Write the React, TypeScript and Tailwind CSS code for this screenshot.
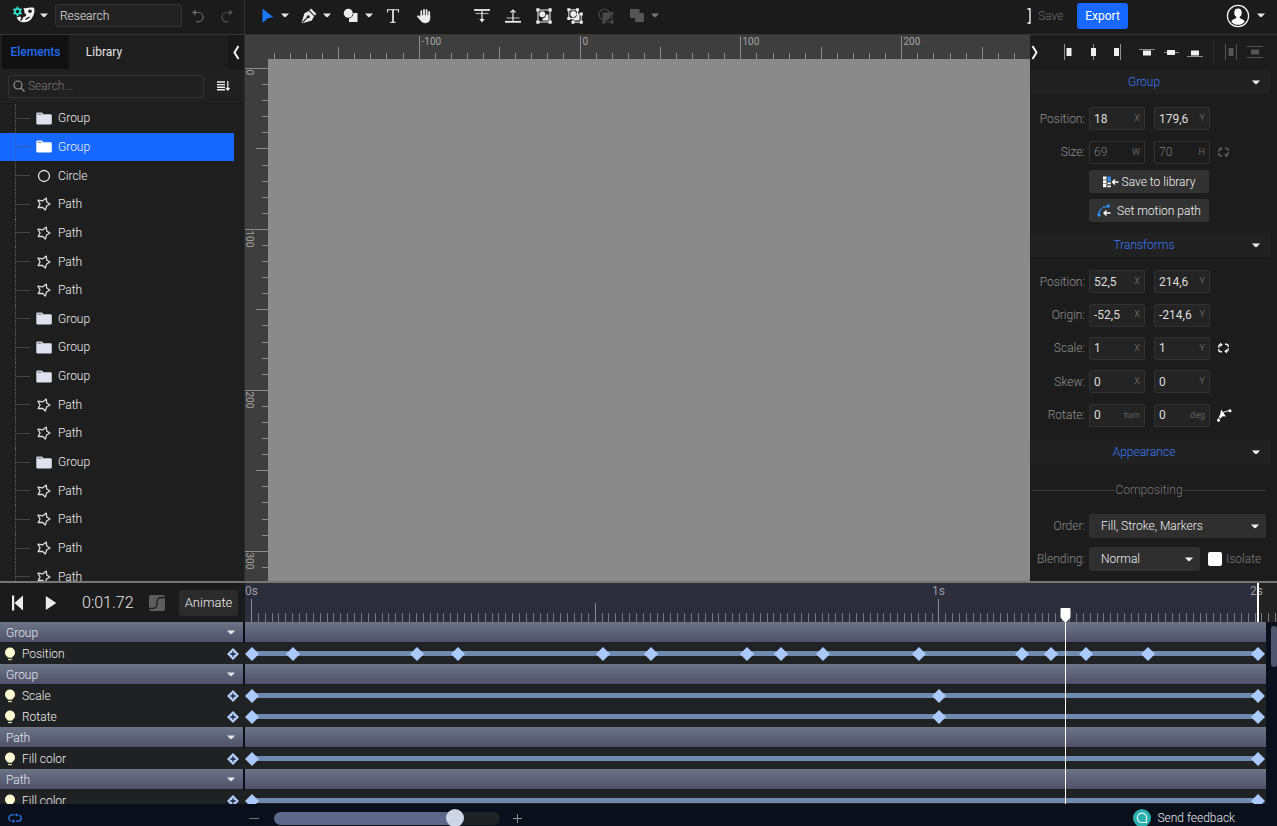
import React, { useEffect, useRef, useState } from "react";

type IconProps = { className?: string };

const Caret = ({ className = "text-[#e6e6e6]" }: IconProps) => (
  <svg width="8" height="5" viewBox="0 0 8 5" className={className} fill="currentColor" aria-hidden="true">
    <path d="M0 .5h8L5 3.8a1.5 1.5 0 0 1-2 0z" />
  </svg>
);

const Logo = () => (
  <svg width="24" height="18" viewBox="0 0 24 18" aria-hidden="true">
    <circle cx="5.500" cy="5.500" r="2.600" fill="none" stroke="#35e0cf" strokeWidth="1.700" />
    <path d="M5.500.8v2M5.500 8.200v2M1.400 3.200l1.800 1M7.800 6.800l1.800 1M1.400 7.800l1.800-1M7.800 4.200l1.800-1" stroke="#35e0cf" strokeWidth="1.900" />
    <path d="M11.500 2C15 3 18 .8 22 1.800c1 3.200.3 6.700-1.500 9.200-1.500 3.200-4 5-8 5.300-4 .2-6.800-1.500-8-5.300 1.600.5 2.600.3 3.500-.7 1 .9 1.400 2.200 2.900 2.200 1.600-2.600 2.300-6.200.6-10.500z" fill="#f2f2f2" />
    <circle cx="18" cy="5.300" r="1.800" fill="#1c1c1c" />
    <circle cx="12.500" cy="9" r="1.700" fill="#1c1c1c" />
    <path d="M13.500 13.500l4-2.300M8.500 14.500l1.800-2.200" stroke="#1c1c1c" strokeWidth="1.400" />
  </svg>
);

const Undo = ({ className }: IconProps) => (
  <svg width="14" height="16" viewBox="0 0 14 16" className={className} fill="none" stroke="currentColor" strokeWidth="1.200" aria-hidden="true">
    <path d="M2 4.500h5.500a4.500 4.500 0 0 1 0 9.200H5.500" />
    <path d="M4.800 1.500v6L1 4.500z" fill="currentColor" stroke="none" />
  </svg>
);

const Pointer = () => (
  <svg width="14" height="16" viewBox="0 0 14 16" aria-hidden="true">
    <path d="M2.500.8 13.500 9.200 8 10l-5.500 5z" fill="#1a78ff" />
  </svg>
);

const Pen = () => (
  <svg width="16" height="16" viewBox="0 0 16 16" aria-hidden="true">
    <path d="M10 .5 15.500 6l-1.800 1.500L8.500 2.200z" fill="#ececec" />
    <path d="M7.800 3 13 8.200l-2.200 4.300L1.500 15.300l-.9-.9L3.500 5.200z" fill="#ececec" />
    <path d="m1.500 14.500 5.200-5.300" stroke="#1c1c1c" strokeWidth="1.200" />
    <circle cx="7.300" cy="8.700" r="1.500" fill="#1c1c1c" />
  </svg>
);

const Shapes = () => (
  <svg width="16" height="15" viewBox="0 0 16 15" aria-hidden="true">
    <path d="M10.500 5H14.500V14H6V10.500A6 6 0 0 0 10.500 5z" fill="#ececec" />
    <circle cx="5.300" cy="5.300" r="4.500" fill="#ececec" />
  </svg>
);

const TextTool = () => (
  <svg width="14" height="16" viewBox="0 0 14 16" fill="none" stroke="#ececec" aria-hidden="true">
    <path d="M1.500 4.500V1.700h11v2.800" strokeWidth="1.100" />
    <path d="M7 1.700v12.600" strokeWidth="1.700" />
    <path d="M4.300 14.300h5.400" strokeWidth="1.100" />
  </svg>
);

const Hand = () => (
  <svg width="16" height="16" viewBox="0 0 16 16" fill="none" stroke="#ececec" strokeLinecap="round" aria-hidden="true">
    <path d="M5.300 8V3.200M8 8V1.800M10.600 8V2.200M13.200 9V4" strokeWidth="1.800" />
    <path d="M4.500 7.500h9.500v3c0 2.500-1.800 4.400-4.600 4.400-2.200 0-3.500-.8-4.700-2.400L1 8.300c.8-1.100 2-.6 3.500.7z" fill="#ececec" strokeWidth=".5" />
  </svg>
);

const MoveDown = () => (
  <svg width="16" height="14" viewBox="0 0 16 14" aria-hidden="true">
    <path d="M0 1h16" stroke="#ececec" strokeWidth="1.800" />
    <path d="M1.500 4.500h13" stroke="#a8a8a8" strokeWidth="1.200" />
    <path d="M8 2v9.500" stroke="#ececec" strokeWidth="1.200" />
    <path d="M5.300 10h5.400L8 13.500z" fill="#ececec" />
  </svg>
);

const MoveUp = () => (
  <svg width="16" height="14" viewBox="0 0 16 14" aria-hidden="true">
    <path d="M0 12.800h16" stroke="#ececec" strokeWidth="1.800" />
    <path d="M1.500 9h13" stroke="#a8a8a8" strokeWidth="1.200" />
    <path d="M8 12V2" stroke="#ececec" strokeWidth="1.200" />
    <path d="m5.500 3.500 2.500-2.500 2.500 2.500" stroke="#ececec" strokeWidth="1.100" fill="none" />
  </svg>
);

const GroupIcon = () => (
  <svg width="16" height="16" viewBox="0 0 16 16" fill="#ececec" aria-hidden="true">
    <path d="M2 2h12v12H2z" fill="none" stroke="#ececec" strokeWidth="1.100" />
    <path d="M.3.300h3.200v3.200H.3zM12.500.300h3.200v3.200h-3.200zM.3 12.500h3.200v3.200H.3zM12.500 12.500h3.200v3.200h-3.200z" />
    <circle cx="6.300" cy="6.300" r="3" />
    <path d="M10 6.500h2.500v6H6.500V10.500A4 4 0 0 0 10 6.500z" />
  </svg>
);

const UngroupIcon = () => (
  <svg width="16" height="16" viewBox="0 0 16 16" fill="#ececec" aria-hidden="true">
    <path d="M1.800 1.800h8.700v8.700H1.800z" fill="none" stroke="#ececec" />
    <path d="M6 6h8.200v8.200H6z" fill="none" stroke="#ececec" />
    <path d="M.3.300h3v3h-3zM9 .3h3v3H9zM.3 9h3v3h-3zM12.800 4.500h3v3h-3zM12.800 12.800h3v3h-3zM4.500 12.800h3v3h-3z" />
    <circle cx="6.300" cy="6" r="3" />
    <path d="M10 6.500h2.500v6H7V10A4 4 0 0 0 10 6.500z" />
  </svg>
);

const MaskIcon = () => (
  <svg width="16" height="16" viewBox="0 0 16 16" fill="#4a4a4a" aria-hidden="true">
    <circle cx="6.500" cy="6.500" r="5.500" fill="none" stroke="#4a4a4a" strokeWidth="1.200" />
    <path d="M5.500 5.500h8.500v8.500H5.500z" fill="none" stroke="#4a4a4a" />
    <path d="M4.500 4.500H12A5.500 5.500 0 0 1 4.500 12z" />
    <path d="M12.800 3.800h2.700v2.700h-2.700zM12.800 12.800h2.700v2.700h-2.700zM4.300 12.800H7v2.700H4.300z" />
  </svg>
);

const UniteIcon = () => (
  <svg width="16" height="15" viewBox="0 0 16 15" aria-hidden="true">
    <path d="M2 1h7.500a1 1 0 0 1 1 1v3H14a1 1 0 0 1 1 1v7a1 1 0 0 1-1 1H7a1 1 0 0 1-1-1v-3H2a1 1 0 0 1-1-1V2a1 1 0 0 1 1-1z" fill="#555" />
  </svg>
);

const Avatar = () => (
  <svg width="24" height="24" viewBox="0 0 24 24" aria-hidden="true">
    <circle cx="12" cy="12" r="10.600" fill="#1c1c1c" stroke="#f4f4f4" strokeWidth="1.200" />
    <ellipse cx="12" cy="8.700" rx="3.700" ry="4.300" fill="#fff" />
    <path d="M10.300 11h3.400v2.800c.6 1.200 3.800 1.500 5 3.600A9 9 0 0 1 12 20.800 9 9 0 0 1 5.300 17.400c1.200-2.100 4.400-2.400 5-3.600z" fill="#fff" />
  </svg>
);

const Angle = ({ flip = false }: { flip?: boolean }) => (
  <svg width="8" height="15" viewBox="0 0 8 15" fill="none" stroke="#f4f4f4" strokeWidth="2" aria-hidden="true">
    <path d={flip ? "M1.500 1 5.500 7.500 1.500 14" : "M6.500 1 2.500 7.500 6.500 14"} />
  </svg>
);

const SearchIcon = () => (
  <svg width="12" height="12" viewBox="0 0 12 12" fill="none" stroke="#9a9a9a" strokeWidth="1.100" aria-hidden="true">
    <circle cx="5" cy="5" r="4" />
    <path d="m8 8 3.500 3.500" />
  </svg>
);

const SortIcon = () => (
  <svg width="13" height="10" viewBox="0 0 13 10" fill="none" stroke="#f0f0f0" aria-hidden="true">
    <path d="M0 1h8M0 3.600h8M0 6.200h8M0 8.800h8" strokeWidth="1.400" />
    <path d="M10.800 0v8.500M9 7l1.800 2L12.600 7" strokeWidth="1.200" />
  </svg>
);

const Folder = ({ className = "text-[#dfe2ee]" }: IconProps) => (
  <svg width="16" height="13" viewBox="0 0 16 13" className={className} aria-hidden="true">
    <path d="M.3 9V1.800A1.300 1.300 0 0 1 1.600.500h4a1.300 1.300 0 0 1 1.200.9l.3.900h7.400A1.300 1.300 0 0 1 15.800 3.600v7.700a1.300 1.300 0 0 1-1.300 1.300H1.600A1.300 1.300 0 0 1 .3 11.300z" fill="currentColor" />
    <path d="M1.500 2.200h4" stroke="#1e1e1e" strokeWidth=".6" />
  </svg>
);

const CircleIcon = () => (
  <svg width="16" height="14" viewBox="0 0 16 14" aria-hidden="true">
    <circle cx="8" cy="7" r="5.500" fill="none" stroke="#dedede" strokeWidth="1.300" />
  </svg>
);

const Star = () => (
  <svg width="16" height="14" viewBox="0 0 16 14" fill="none" stroke="#dedede" strokeWidth="1.300" strokeLinejoin="round" aria-hidden="true">
    <path d="M10.300 1.100 10.700 5 14 7 10.600 9 9.300 13.100 6.500 10.300 2.200 10.500 4 7 2 3.200 6.500 3.900z" />
  </svg>
);

const Chain = ({ className }: IconProps) => (
  <svg width="13" height="12" viewBox="0 0 13 12" fill="none" stroke="currentColor" strokeWidth="1.400" className={className} aria-hidden="true">
    <path d="M5 9.800H3.800Q1.800 9.800 1.800 8V7M1.800 5.800V4.500Q1.800 2.800 3.500 2.800" />
    <path d="M3 .5 5.800 2.800 3 5z" fill="currentColor" stroke="none" />
    <path d="M8 2.200h1.200Q11.200 2.200 11.200 4V5M11.200 6.200v1.300Q11.200 9.200 9.500 9.200" />
    <path d="M10 11.500 7.200 9.200 10 7z" fill="currentColor" stroke="none" />
  </svg>
);

const RotateIcon = () => (
  <svg width="15" height="13" viewBox="0 0 15 13" aria-hidden="true">
    <path d="M1.500 11Q2.500 5 6 3.500T13 1.500" stroke="#e8e8e8" fill="none" />
    <circle cx="13" cy="1.800" r="1.500" fill="#fff" />
    <circle cx="1.500" cy="11.300" r="1.500" fill="#fff" />
    <path d="M4 .5 9 7.500l-3.300-.2L2.800 10z" fill="#fff" />
  </svg>
);

const LibraryIcon = () => (
  <svg width="16" height="12" viewBox="0 0 16 12" aria-hidden="true">
    <path d="M0 .5h3.500v3H0zM0 7.800h3.500v3.500H0zM0 4.200h3.500v3H0z" fill="#fff" />
    <path d="M4.500.500h3.300v5H4.500z" fill="#2f8df0" />
    <path d="M4.500 6.500h3.300v1.800H4.500zM4.500 9.500h3.300v1.800H4.500z" fill="#fff" />
    <path d="M9.500 6h6M12 3.500 9.500 6l2.500 2.500" stroke="#fff" strokeWidth="1.400" fill="none" />
  </svg>
);

const MotionIcon = () => (
  <svg width="14" height="13" viewBox="0 0 14 13" aria-hidden="true">
    <path d="M2 10Q2.500 3 11 2.300" stroke="#2f8df0" strokeWidth="1.200" fill="none" strokeDasharray="6 1.500" />
    <circle cx="2" cy="11" r="1.700" fill="#2f8df0" />
    <circle cx="11.300" cy="2" r="1.700" fill="#2f8df0" />
    <path d="M7 9h6.500M9.500 6.500 7 9l2.500 2.500" stroke="#fff" strokeWidth="1.400" fill="none" />
  </svg>
);

const AlignIcon = ({ line, box, dim = false }: { line: string; box: string; dim?: boolean }) => (
  <svg width="16" height="16" viewBox="0 0 16 16" aria-hidden="true">
    <path d={line} stroke={dim ? "#555" : "#8f8f8f"} fill="none" />
    <path d={box} fill={dim ? "#555" : "#f0f0f0"} />
  </svg>
);

const Bulb = () => (
  <svg width="12" height="14" viewBox="0 0 12 14" aria-hidden="true">
    <circle cx="6" cy="5.500" r="5" fill="#fdfcd2" />
    <path d="M3.500 9h5v1.500h-5z" fill="#fdfcd2" />
    <path d="M4 12.500h4" stroke="#d8d6a4" strokeWidth="1.300" />
  </svg>
);

const AddKey = () => (
  <svg width="12" height="12" viewBox="0 0 12 12" aria-hidden="true">
    <path d="M6 0l6 6-6 6-6-6z" fill="#b4d0fa" />
    <path d="M6 3.300v5.400M3.300 6h5.400" stroke="#14233c" strokeWidth="1.300" />
  </svg>
);

const Key = () => (
  <svg width="14" height="14" viewBox="0 0 14 14" aria-hidden="true">
    <path d="M7 0l7 7-7 7-7-7z" fill="#a9cafa" />
  </svg>
);

const iconButton = "flex h-6 w-5 shrink-0 items-center justify-center";
const caretButton = "flex h-6 w-4 shrink-0 items-center justify-center";

function Header() {
  return (
    <header className="flex h-[35px] shrink-0 border-b border-[#353535] bg-[#1b1b1b]">
      <div className="flex w-[245px] shrink-0 items-start border-r border-[#353535]">
        <button aria-label="Main menu" className="mt-[6px] ml-3 flex h-[18px] items-center gap-1">
          <Logo />
          <Caret />
        </button>
        <input
          aria-label="Project name"
          defaultValue="Research"
          className="mt-1 ml-[7px] h-[23px] w-[127px] rounded-[3px] border border-[#333] bg-[#222] px-1 text-xs font-light text-[#e4e4e4] outline-none"
        />
        <button aria-label="Undo" className="ml-2 flex h-[31px] w-[15px] items-center justify-center">
          <Undo className="text-[#666]" />
        </button>
        <button aria-label="Redo" className="ml-[14px] flex h-[31px] w-[15px] items-center justify-center">
          <Undo className="-scale-x-100 text-[#505050]" />
        </button>
      </div>
      <div className="flex h-[31px] min-w-0 flex-1 items-center overflow-hidden pl-3">
        <button aria-label="Select" className={iconButton}><Pointer /></button>
        <button aria-label="Select options" className={caretButton}><Caret /></button>
        <button aria-label="Pen" className={iconButton + " ml-[6px]"}><Pen /></button>
        <button aria-label="Pen options" className={caretButton}><Caret /></button>
        <button aria-label="Shapes" className={iconButton + " ml-[6px]"}><Shapes /></button>
        <button aria-label="Shape options" className={caretButton}><Caret /></button>
        <button aria-label="Text" className={iconButton + " ml-[6px]"}><TextTool /></button>
        <button aria-label="Pan" className={iconButton + " ml-[11px]"}><Hand /></button>
        <div className="ml-[38px] flex gap-[11px]">
          <button aria-label="Move backward" className={iconButton}><MoveDown /></button>
          <button aria-label="Move forward" className={iconButton}><MoveUp /></button>
          <button aria-label="Group" className={iconButton}><GroupIcon /></button>
          <button aria-label="Ungroup" className={iconButton}><UngroupIcon /></button>
          <button aria-label="Mask" className={iconButton}><MaskIcon /></button>
          <button aria-label="Unite" className={iconButton}><UniteIcon /></button>
        </div>
        <button aria-label="Boolean options" className={caretButton}><Caret className="text-[#777]" /></button>
      </div>
      <div className="flex h-[31px] shrink-0 items-center pr-3">
        <svg width="4" height="16" viewBox="0 0 4 16" fill="none" stroke="#fff" strokeWidth="1.300" aria-hidden="true">
          <path d="M.5 1h2.500v14H.5" />
        </svg>
        <button className="ml-[7px] w-[27px] text-left text-xs font-light text-[#6e6e6e]">Save</button>
        <button className="ml-3 h-[26px] w-[51px] rounded-[3px] bg-[#1668ff] text-xs text-white">Export</button>
        <button aria-label="Account" className="ml-[98px] flex items-center gap-[7px]">
          <Avatar />
          <Caret />
        </button>
      </div>
    </header>
  );
}

const treeItems = [
  "Group", "Group", "Circle", "Path", "Path", "Path", "Path", "Group", "Group",
  "Group", "Path", "Path", "Group", "Path", "Path", "Path", "Path",
];

function ElementsPanel() {
  const [selected, setSelected] = useState(1);
  return (
    <aside className="flex w-[245px] shrink-0 flex-col overflow-hidden border-r border-[#2a2a2a] bg-[#1e1e1e]">
      <div className="flex h-[34px] shrink-0 items-stretch pl-[2px] text-xs">
        <button className="w-[67px] rounded-[3px] bg-[#111] font-medium text-[#1f6cf0]">Elements</button>
        <button className="w-[70px] text-[#e2e2e2]">Library</button>
        <button aria-label="Collapse panel" className="ml-auto flex w-4 items-center justify-center bg-[#191919]"><Angle /></button>
      </div>
      <div className="flex h-[35px] shrink-0 items-center border-b border-[#1a1a1a] bg-[#202020] pl-2">
        <label className="flex h-[23px] w-[196px] items-center gap-[3px] rounded-[3px] border border-[#323232] px-1">
          <SearchIcon />
          <input aria-label="Search elements" placeholder="Search..." className="min-w-0 flex-1 bg-transparent text-xs font-light text-white outline-none placeholder:text-[#7a7a7a]" />
        </label>
        <button aria-label="Sort" className="ml-[13px]"><SortIcon /></button>
      </div>
      <div className="min-h-0 flex-1 overflow-hidden">
        <ul className="grid h-[487px] auto-rows-fr">
          {treeItems.map((name, i) => (
            <li key={i} className={selected === i ? "w-[234px] bg-[#1668ff]" : "w-[234px]"}>
              <button onClick={() => setSelected(i)} className="flex h-full w-full items-center pl-[15px] text-left">
                <span className={selected === i ? "h-full border-l border-dotted border-[#2a5cb8]" : "h-full border-l border-dotted border-[#606060]"} />
                <span className={selected === i ? "w-[14px] border-t border-[#2a5cb8]" : "w-[14px] border-t border-[#444]"} />
                <span className="ml-[6px]">
                  {name === "Group" ? <Folder className={selected === i ? "text-white" : "text-[#dfe2ee]"} /> : name === "Circle" ? <CircleIcon /> : <Star />}
                </span>
                <span className="ml-[6px] text-xs font-light text-[#f0f0f0]">{name}</span>
              </button>
            </li>
          ))}
        </ul>
      </div>
    </aside>
  );
}

const UNIT = 16.09;

function tickLength(k: number) {
  if (k % 10 === 0) return 23;
  return k % 5 === 0 ? 12 : 6;
}

function Canvas() {
  const ref = useRef<HTMLElement>(null);
  const [size, setSize] = useState({ width: 0, height: 0 });

  useEffect(() => {
    const element = ref.current;
    if (!element) return;
    const measure = () => setSize({ width: element.clientWidth, height: element.clientHeight });
    measure();
    const observer = new ResizeObserver(measure);
    observer.observe(element);
    return () => observer.disconnect();
  }, []);

  const columns = Math.max(0, Math.ceil((size.width - 30) / UNIT));
  const lines = Math.max(0, Math.ceil((size.height - 34) / UNIT));
  const horizontal = Array.from({ length: columns }, (_, i) => i - 19);
  const vertical = Array.from({ length: lines }, (_, i) => i);

  return (
    <main ref={ref} className="grid min-w-0 flex-1 grid-cols-[23px_1fr] grid-rows-[24px_1fr] overflow-hidden bg-[#3e3e3e]">
      <div className="col-span-2 overflow-hidden">
        <svg width="100%" height="24" className="block" aria-hidden="true">
          {horizontal.map((k) => {
            const x = Math.round(335.500 + k * UNIT) - 0.5;
            return (
              <g key={k}>
                <path d={`M${x} ${24 - tickLength(k)}V24`} stroke="#8c8c8c" />
                {k % 10 === 0 && <text x={x + 2} y="10" fontSize="10" fill="#a5a5a5">{k * 10}</text>}
              </g>
            );
          })}
        </svg>
      </div>
      <div className="overflow-hidden">
        <svg width="23" height="100%" className="block" aria-hidden="true">
          {vertical.map((k) => {
            const y = Math.round(10 + k * UNIT) - 0.5;
            return (
              <g key={k}>
                <path d={`M${23 - tickLength(k)} ${y}H23`} stroke="#8c8c8c" />
                {k % 10 === 0 && <text fontSize="10" fill="#a5a5a5" transform={`translate(1 ${y + 1}) rotate(90)`}>{k * 10}</text>}
              </g>
            );
          })}
        </svg>
      </div>
      <div className="bg-[#8a8a8a]" />
    </main>
  );
}

function SectionTitle({ children }: { children: string }) {
  return (
    <button className="mr-[7px] ml-px flex h-6 items-center bg-[#212121] pl-[15px] text-xs font-light text-[#3a7bf5]">
      <span className="flex-1 text-center">{children}</span>
      <span className="flex w-7 justify-center"><Caret className="text-[#f4f4f4]" /></span>
    </button>
  );
}

function Field({ label, value, unit, dim = false }: { label: string; value: string; unit: string; dim?: boolean }) {
  return (
    <span className={dim ? "flex h-[23px] w-14 items-center rounded-[2px] border border-[#333] pr-1 pl-1" : "flex h-[23px] w-14 items-center rounded-[2px] border border-[#313131] bg-[#242424] pr-1 pl-1"}>
      <input
        aria-label={label + " " + unit}
        defaultValue={value}
        className={dim ? "w-0 min-w-0 flex-1 bg-transparent text-xs font-light text-[#7c7c7c] outline-none" : "w-0 min-w-0 flex-1 bg-transparent text-xs text-[#dedede] outline-none"}
      />
      <span className="text-[9px] text-[#626262]">{unit}</span>
    </span>
  );
}

function FieldRow({ label, values, units, dim = false, children }: { label: string; values: [string, string]; units: [string, string]; dim?: boolean; children?: React.ReactNode }) {
  return (
    <div role="group" aria-label={label} className="flex items-center">
      <span className="w-[55px] text-right text-xs font-light text-[#929292]">{label}:</span>
      <span className="ml-1 flex gap-[9px]">
        <Field label={label} value={values[0]} unit={units[0]} dim={dim} />
        <Field label={label} value={values[1]} unit={units[1]} dim={dim} />
      </span>
      <span className="ml-[7px]">{children}</span>
    </div>
  );
}

function PropertiesPanel() {
  const actionButton = "flex h-[23px] w-[120px] items-center justify-center rounded-[2px] bg-[#323232] text-xs font-light whitespace-nowrap text-[#f4f4f4]";
  return (
    <aside className="flex w-[247px] shrink-0 flex-col overflow-hidden bg-[#1c1c1c]">
      <div className="flex h-[34px] shrink-0 items-center">
        <button aria-label="Collapse properties" className="flex w-[10px] justify-center"><Angle flip /></button>
        <div className="ml-[21px] flex gap-2">
          <button aria-label="Align left"><AlignIcon line="M3.500 0v16" box="M5.500 4h5v8h-5z" /></button>
          <button aria-label="Align center"><AlignIcon line="M8.500 0v16" box="M6 4h5v8H6z" /></button>
          <button aria-label="Align right"><AlignIcon line="M11.500 0v16" box="M5 4h5v8H5z" /></button>
        </div>
        <div className="ml-[14px] flex gap-2">
          <button aria-label="Align top"><AlignIcon line="M0 5.500h16" box="M4 6.500h8v5H4z" /></button>
          <button aria-label="Align middle"><AlignIcon line="M1 8.500h15" box="M4 6h8v5H4z" /></button>
          <button aria-label="Align bottom"><AlignIcon line="M0 12.500h16" box="M4 6.500h8v5H4z" /></button>
        </div>
        <span className="ml-[10px] h-6 border-l border-[#2c2c2c]" />
        <div className="ml-[9px] flex gap-2">
          <button aria-label="Distribute horizontally"><AlignIcon dim line="M2.500 0v16M13.500 0v16" box="M5.500 4h5v8h-5z" /></button>
          <button aria-label="Distribute vertically"><AlignIcon dim line="M0 2.500h16M0 13.500h16" box="M4 5.500h8v5H4z" /></button>
        </div>
      </div>

      <div className="mt-px flex shrink-0 flex-col">
        <SectionTitle>Group</SectionTitle>
        <div className="mt-2 grid h-[67px] auto-rows-fr items-center">
          <FieldRow label="Position" values={["18", "179,6"]} units={["X", "Y"]} />
          <FieldRow label="Size" values={["69", "70"]} units={["W", "H"]} dim>
            <Chain className="text-[#5c5c5c]" />
          </FieldRow>
        </div>
        <div className="mt-px ml-[59px] flex flex-col gap-[6px]">
          <button className={actionButton + " gap-[3px]"}><LibraryIcon />Save to library</button>
          <button className={actionButton + " gap-[6px]"}><MotionIcon />Set motion path</button>
        </div>
      </div>

      <div className="mt-[11px] flex shrink-0 flex-col">
        <SectionTitle>Transforms</SectionTitle>
        <div className="mt-2 grid h-[167px] auto-rows-fr items-center">
          <FieldRow label="Position" values={["52,5", "214,6"]} units={["X", "Y"]} />
          <FieldRow label="Origin" values={["-52,5", "-214,6"]} units={["X", "Y"]} />
          <FieldRow label="Scale" values={["1", "1"]} units={["X", "Y"]}>
            <Chain className="text-[#f0f0f0]" />
          </FieldRow>
          <FieldRow label="Skew" values={["0", "0"]} units={["X", "Y"]} />
          <FieldRow label="Rotate" values={["0", "0"]} units={["turn", "deg"]}>
            <RotateIcon />
          </FieldRow>
        </div>
      </div>

      <div className="mt-2 flex shrink-0 flex-col">
        <SectionTitle>Appearance</SectionTitle>
        <div className="mt-4 mr-[11px] ml-[2px] flex h-5 items-center text-xs font-light text-[#777]">
          <span className="flex-1 border-t border-[#383838]" />
          Compositing
          <span className="flex-1 border-t border-[#383838]" />
        </div>
        <div className="mt-[14px] mr-[11px] flex items-center">
          <label htmlFor="order" className="w-[55px] text-right text-xs font-light text-[#8a8a8a]">Order:</label>
          <span className="relative ml-1 flex flex-1 items-center">
            <select id="order" className="h-6 w-full appearance-none rounded-[2px] bg-[#2f2f2f] pl-3 text-xs font-light text-[#f0f0f0] outline-none">
              <option>Fill, Stroke, Markers</option>
            </select>
            <span className="pointer-events-none absolute right-[7px]"><Caret className="text-[#f4f4f4]" /></span>
          </span>
        </div>
        <div className="mt-[9px] flex items-center">
          <label htmlFor="blending" className="w-[55px] text-right text-xs font-light whitespace-nowrap text-[#8a8a8a]">Blending:</label>
          <span className="relative ml-1 flex w-[111px] items-center">
            <select id="blending" className="h-6 w-full appearance-none rounded-[2px] bg-[#2f2f2f] pl-3 text-xs font-light text-[#f0f0f0] outline-none">
              <option>Normal</option>
            </select>
            <span className="pointer-events-none absolute right-[7px]"><Caret className="text-[#f4f4f4]" /></span>
          </span>
          <label className="ml-2 flex items-center gap-1 text-xs font-light text-[#7c7c7c]">
            <input type="checkbox" className="size-[14px] appearance-none rounded-[2px] bg-white checked:bg-[#1668ff]" />
            Isolate
          </label>
        </div>
      </div>
    </aside>
  );
}

type Row = { name: string; keys?: number[] };

const rows: Row[] = [
  { name: "Group" },
  { name: "Position", keys: [0, 6, 24, 30, 51, 58, 72, 77, 83, 97, 112, 116.3, 121.3, 130.3, 146.3] },
  { name: "Group" },
  { name: "Scale", keys: [0, 100, 146.3] },
  { name: "Rotate", keys: [0, 100, 146.3] },
  { name: "Path" },
  { name: "Fill color", keys: [0, 146.3] },
  { name: "Path" },
  { name: "Fill color", keys: [0, 146.3] },
];

const frameX = (frame: number) => Math.round(7 + frame * 6.874);

const headingRow = "h-[21px] shrink-0 border-b border-[#1c1c22] bg-linear-to-b from-[#6d7587] to-[#50516a]";

function Timeline() {
  const [zoom, setZoom] = useState(825);
  const fill = (9 + (zoom / 1000) * 208) / 2.26;
  const frames = Array.from({ length: 400 }, (_, i) => i - 1);
  return (
    <section className="shrink-0 border-t-2 border-[#767676] bg-[#0a101b]">
      <div className="flex">
        <div className="w-[245px] shrink-0">
          <div className="flex h-[39px] items-center bg-[#1b1b1b]">
            <button aria-label="Go to start" className="ml-[11px]">
              <svg width="13" height="16" viewBox="0 0 13 16" fill="#ececec" aria-hidden="true"><path d="M1 .5h2.200v15H1zM12 .5v15L3.500 8z" /></svg>
            </button>
            <button aria-label="Play" className="ml-[21px]">
              <svg width="12" height="16" viewBox="0 0 12 16" fill="#ececec" aria-hidden="true"><path d="M.8 1 11.300 8 .8 15z" /></svg>
            </button>
            <time className="ml-[25px] w-14 text-base font-light text-[#e4e4e4]">0:01.72</time>
            <button aria-label="Easing" className="ml-[11px]">
              <svg width="16" height="16" viewBox="0 0 16 16" aria-hidden="true">
                <rect width="16" height="16" rx="2" fill="#5d5d5d" />
                <path d="M0 13.500c7 0 8-1 8-5.500s1-5.500 8-5.500" stroke="#1c1c1c" strokeWidth="1.300" fill="none" />
              </svg>
            </button>
            <button className="ml-[14px] h-[26px] w-[59px] rounded-[2px] bg-[#2b2b2b] text-[13px] font-light text-[#f0f0f0]">Animate</button>
          </div>
          <ul className="flex h-[182px] flex-col overflow-hidden">
            {rows.map((row, i) =>
              row.keys ? (
                <li key={i} className="flex h-[21px] shrink-0 items-center bg-[#202122] pr-[6px] pl-1 text-xs font-light text-[#f0f0f0]">
                  <Bulb />
                  <span className="ml-[6px] flex-1">{row.name}</span>
                  <button aria-label="Add keyframe"><AddKey /></button>
                </li>
              ) : (
                <li key={i} className={headingRow + " mr-[2px] flex items-center pt-px pr-2 pl-[6px] text-xs font-light text-[#e4e7f0]"}>
                  <span className="flex-1">{row.name}</span>
                  <button aria-label="Toggle section"><Caret /></button>
                </li>
              )
            )}
          </ul>
        </div>

        <div className="relative min-w-0 flex-1 overflow-hidden">
          <div className="h-[39px] bg-[#2d2e3b]">
            <svg width="100%" height="39" aria-hidden="true">
              <rect x="1013" width="4000" height="39" fill="#222" />
              {frames.map((f) => (
                <path key={f} d={`M${frameX(f) - 0.5} ${f % 100 === 0 ? 16 : f % 50 === 0 ? 20 : 30}V39`} stroke={f % 50 === 0 ? "#8a8b93" : "#74757e"} />
              ))}
              <text x="0" y="12" fontSize="12" fill="#9a9ba3">0s</text>
              <text x="687" y="12" fontSize="12" fill="#9a9ba3">1s</text>
              <text x="1005" y="12" fontSize="12" fill="#9a9ba3">2s</text>
              <path d="M1013 0v39" stroke="#fff" strokeWidth="2" />
            </svg>
          </div>
          <div className="flex h-[182px]">
            <div className="flex min-w-0 flex-1 flex-col overflow-hidden">
              {rows.map((row, i) =>
                row.keys ? (
                  <div key={i} className="relative h-[21px] shrink-0 bg-[#212223]">
                    <span className="absolute top-2 left-[7px] h-[5px] w-[1006px] bg-[#7089ae]" />
                    {row.keys.map((k) => (
                      <span key={k} className="absolute top-1 -ml-[7px]" style={{ left: frameX(k) }}><Key /></span>
                    ))}
                  </div>
                ) : (
                  <div key={i} className={headingRow} />
                )
              )}
            </div>
            <div className="w-[11px] shrink-0 pt-1 pl-[5px]">
              <div className="h-[41px] rounded-[3px] bg-[#4d566c]" />
            </div>
          </div>
          <div className="absolute top-[25px] bottom-0 left-[815px] flex w-[11px] flex-col items-center">
            <svg width="11" height="14" viewBox="0 0 11 14" className="shrink-0" aria-hidden="true">
              <path d="M.5 1a1 1 0 0 1 1-1h8a1 1 0 0 1 1 1v8.500L6.500 14h-2L.5 9.500z" fill="#fff" />
            </svg>
            <span className="w-px flex-1 bg-white" />
          </div>
        </div>
      </div>

      <footer className="flex h-[22px] items-center overflow-hidden pt-[6px]">
        <button aria-label="Loop" className="ml-2">
          <svg width="14" height="10" viewBox="0 0 14 10" fill="none" stroke="#2a76e8" strokeWidth="1.300" aria-hidden="true">
            <path d="M6 1.800H4a3.200 3.200 0 0 0-1.500 6M8 8.200h2a3.200 3.200 0 0 0 1.500-6M5 8.200H3.500M9 1.800h1.500" />
            <path d="M5 6.200v3.600L7.300 8.200zM9 .2v3.600L6.700 1.800z" fill="#2a76e8" stroke="none" />
          </svg>
        </button>
        <button aria-label="Zoom out" className="ml-[227px]">
          <svg width="10" height="10" viewBox="0 0 10 10" stroke="#6f7480" aria-hidden="true"><path d="M0 5.500h10" /></svg>
        </button>
        <input
          type="range"
          aria-label="Timeline zoom"
          min="0"
          max="1000"
          value={zoom}
          onChange={(e) => setZoom(Number(e.target.value))}
          style={{ background: `linear-gradient(to right, #5d678a ${fill}%, #1f2125 ${fill}%)` }}
          className="ml-[15px] h-[13px] w-[226px] shrink-0 appearance-none rounded-full outline-none [&::-webkit-slider-thumb]:size-[18px] [&::-webkit-slider-thumb]:appearance-none [&::-webkit-slider-thumb]:rounded-full [&::-webkit-slider-thumb]:bg-[#cdd5e6]"
        />
        <button aria-label="Zoom in" className="ml-3">
          <svg width="10" height="10" viewBox="0 0 10 10" stroke="#8a8f9a" aria-hidden="true"><path d="M1 5.500h9M5.500 1v9" /></svg>
        </button>
        <a href="#feedback" className="mr-[42px] ml-auto flex items-center gap-[6px] text-xs font-light text-[#e8e8ec]">
          <svg width="18" height="18" viewBox="0 0 18 18" aria-hidden="true">
            <circle cx="9" cy="9" r="9" fill="#2bb0ae" />
            <path d="M13.500 13.500H9A4.700 4.700 0 1 1 13.700 9c0 1.700-.8 2.600-.2 4.500z" fill="none" stroke="#e4fafa" strokeWidth="1.200" />
          </svg>
          Send feedback
        </a>
      </footer>
    </section>
  );
}

export default function App() {
  return (
    <div className="flex h-screen flex-col overflow-hidden bg-[#1c1c1c] font-['Roboto',sans-serif]">
      <Header />
      <div className="flex min-h-0 flex-1">
        <ElementsPanel />
        <Canvas />
        <PropertiesPanel />
      </div>
      <Timeline />
    </div>
  );
}
